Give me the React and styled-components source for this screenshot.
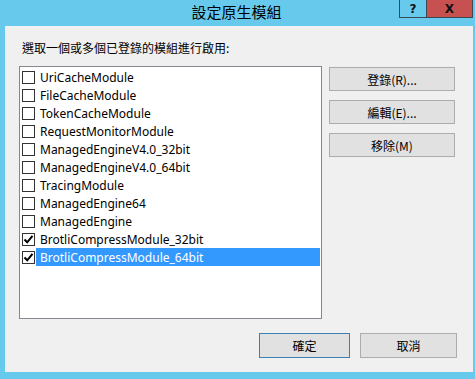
import React from "react";
import styled, { createGlobalStyle } from "styled-components";

const Global = createGlobalStyle`
  html, body { margin: 0; padding: 0; }
  body { width: 475px; height: 379px; overflow: hidden; background: #67c9ec; }
`;

const UI = `"Noto Sans", "Noto Sans CJK TC", sans-serif`;
const CJK = `"Noto Sans CJK TC", "Noto Sans", sans-serif`;

const Frame = styled.div`
  width: 475px;
  height: 379px;
  box-sizing: border-box;
  background: #67c9ec;
  padding: 0 2px 7px 5px;
  display: flex;
  flex-direction: column;
`;

const TitleBar = styled.div`
  height: 26px;
  display: grid;
  grid-template-columns: 1fr auto 1fr;
  align-items: start;
`;

const Title = styled.div`
  grid-column: 2;
  font-family: ${CJK};
  font-size: 15px;
  line-height: 15px;
  padding-top: 4px;
  color: #000;
  margin-left: -5px;
`;

const Caption = styled.div`
  grid-column: 3;
  justify-self: end;
  display: flex;
`;

const CapButton = styled.div`
  box-sizing: border-box;
  width: ${(p) => p.$w}px;
  height: 18px;
  background: ${(p) => p.$bg};
  border: 1px solid #3a4a55;
  border-top: none;
  ${(p) => (p.$close ? "border-left: none;" : "")}
  display: flex;
  align-items: center;
  justify-content: center;
  font-family: "DejaVu Sans", sans-serif;
  font-weight: bold;
  font-size: 12px;
  color: #111;
`;

const Client = styled.div`
  flex: 1;
  background: #f0f0f0;
  display: flex;
  flex-direction: column;
  padding: 14px 16px 14px 14px;
`;

const Label = styled.div`
  font-family: ${CJK};
  font-size: 12px;
  line-height: 16px;
  color: #000;
  margin-left: 3px;
  margin-bottom: 10px;
`;

const Main = styled.div`
  display: flex;
  gap: 7px;
  align-items: flex-start;
`;

const ListBox = styled.div`
  box-sizing: border-box;
  width: 303px;
  height: 253px;
  background: #fff;
  border: 1px solid #828790;
  padding: 1px 1px 0 2px;
  display: flex;
  flex-direction: column;
`;

const Row = styled.div`
  height: 18px;
  display: flex;
  align-items: center;
`;

const Check = styled.div`
  box-sizing: border-box;
  width: 13px;
  height: 13px;
  border: 1px solid #333;
  background: #fff;
  flex: none;
  display: flex;
  align-items: center;
  justify-content: center;
`;

const ItemText = styled.div`
  flex: 1;
  height: 18px;
  margin-left: 1px;
  padding-left: 4px;
  display: flex;
  align-items: center;
  font-family: ${UI};
  font-size: 12px;
  color: ${(p) => (p.$sel ? "#fff" : "#000")};
  background: ${(p) => (p.$sel ? "#3399ff" : "transparent")};
`;

const SideButtons = styled.div`
  display: flex;
  flex-direction: column;
  gap: 9px;
  padding-top: 1px;
`;

const Button = styled.div`
  box-sizing: border-box;
  width: ${(p) => p.$w || 126}px;
  height: ${(p) => p.$h || 24}px;
  background: #e1e1e1;
  border: 1px solid ${(p) => (p.$def ? "#3c7fb1" : "#adadad")};
  display: flex;
  align-items: center;
  justify-content: center;
  font-family: ${CJK};
  font-size: 12px;
  color: #000;
`;

const Footer = styled.div`
  margin-top: auto;
  display: flex;
  justify-content: flex-end;
  gap: 10px;
`;

const Tick = () => (
  <svg width="11" height="11" viewBox="0 0 11 11">
    <path d="M1.5 5.5 L4.2 8.3 L9.5 1.8" fill="none" stroke="#000" strokeWidth="2" />
  </svg>
);

const modules = [
  ["UriCacheModule", false],
  ["FileCacheModule", false],
  ["TokenCacheModule", false],
  ["RequestMonitorModule", false],
  ["ManagedEngineV4.0_32bit", false],
  ["ManagedEngineV4.0_64bit", false],
  ["TracingModule", false],
  ["ManagedEngine64", false],
  ["ManagedEngine", false],
  ["BrotliCompressModule_32bit", true],
  ["BrotliCompressModule_64bit", true],
];

export default function App() {
  return (
    <>
      <Global />
      <Frame>
        <TitleBar>
          <Title>設定原生模組</Title>
          <Caption>
            <CapButton $w={28} $bg="#67c9ec">?</CapButton>
            <CapButton $w={46} $bg="#c75050" $close>X</CapButton>
          </Caption>
        </TitleBar>
        <Client>
          <Label>選取一個或多個已登錄的模組進行啟用:</Label>
          <Main>
            <ListBox>
              {modules.map(([name, checked], i) => (
                <Row key={name}>
                  <Check>{checked && <Tick />}</Check>
                  <ItemText $sel={i === modules.length - 1}>{name}</ItemText>
                </Row>
              ))}
            </ListBox>
            <SideButtons>
              <Button>登錄(R)...</Button>
              <Button>編輯(E)...</Button>
              <Button>移除(M)</Button>
            </SideButtons>
          </Main>
          <Footer>
            <Button $w={91} $h={25} $def>確定</Button>
            <Button $w={97} $h={25}>取消</Button>
          </Footer>
        </Client>
      </Frame>
    </>
  );
}
